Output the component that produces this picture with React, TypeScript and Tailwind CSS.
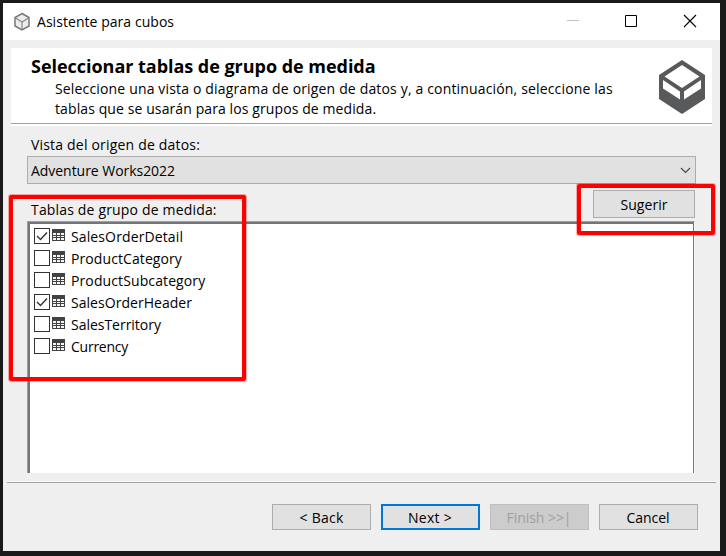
import React from "react";

const tables = [
  { name: "SalesOrderDetail", tracking: "tracking-[0.12px]", checked: true },
  { name: "ProductCategory", tracking: "tracking-[0.09px]", checked: false },
  { name: "ProductSubcategory", tracking: "tracking-[0.11px]", checked: false },
  { name: "SalesOrderHeader", tracking: "tracking-[0.04px]", checked: true },
  { name: "SalesTerritory", tracking: "tracking-[-0.02px]", checked: false },
  { name: "Currency", tracking: "tracking-[-0.25px]", checked: false },
];

const buttonBase = "flex h-[26px] w-[99px] items-center justify-center pt-px leading-5 whitespace-pre";

function TableIcon() {
  return (
    <svg width="13" height="12" className="mt-px ml-[2px] block shrink-0" shapeRendering="crispEdges">
      <path d="M0 0h13v12H0z" fill="#424242" />
      <path d="M1 4h3v2H1zM5 4h3v2H5zM9 4h3v2H9zM1 7h3v1H1zM5 7h3v1H5zM9 7h3v1H9zM1 9h3v2H1zM5 9h3v2H5zM9 9h3v2H9z" fill="#f5f5f5" />
    </svg>
  );
}

export default function App() {
  return (
    <div className="relative h-[556px] w-[726px] overflow-hidden bg-[#1a1a1a] pt-[3px] pl-[3px] font-['Open_Sans','Noto_Sans',sans-serif] text-[14px] leading-5 whitespace-nowrap text-black">
      <div className="flex h-[548px] w-[717px] flex-col bg-[#efefef]">
        <header className="flex h-[37px] shrink-0 items-center bg-white pl-[10px]">
          <svg width="18" height="20" viewBox="0 0 18 20" fill="#ececec" stroke="#777" strokeWidth="1.5">
            <path d="M9 1.5l7 4v8.5l-7 4-7-4V5.5z" />
            <path d="M2.5 6L9 10l6.5-4M9 10v7.5" fill="none" stroke="#888" strokeWidth="1.2" />
          </svg>
          <span className="ml-[6px] tracking-[0.05px]">Asistente para cubos</span>
          <svg width="132" height="14" className="mr-[22px] mb-px ml-auto" fill="none" stroke="#000">
            <path d="M1 6.5h12" stroke="#c4c4c4" />
            <path d="M59.5 1.5h11v11h-11z" />
            <path d="M118 1l12 12M130 1L118 13" strokeWidth="1.1" />
          </svg>
        </header>

        <section className="mx-2 mt-2 flex h-[78px] shrink-0 flex-col bg-white">
          <div className="flex h-[75px] justify-between">
            <div className="pt-2 pl-5">
              <h1 className="text-[18px] leading-5 font-bold tracking-[-0.03px]">Seleccionar tablas de grupo de medida</h1>
              <p className="mt-[3px] ml-6 tracking-[0.16px]">
                Seleccione una vista o diagrama de origen de datos y, a continuación, seleccione las
              </p>
              <p className="ml-6 tracking-[0.1px]">tablas que se usarán para los grupos de medida.</p>
            </div>
            <svg width="46" height="54" viewBox="0 0 46 54" className="mt-3 mr-[7px]" fill="#58595b">
              <path d="M23 0L46 15v24L23 54 0 39V15z" />
              <path d="M23 5L40.5 16.5 23 28 5.5 16.5zM4 20l17 11.5v8L4 28.5zM42 20L25 31.5v8l17-11z" fill="#fff" />
            </svg>
          </div>
          <div className="h-px bg-[#a0a0a0]" />
        </section>

        <main className="mx-6 flex flex-col">
          <label className="mt-[9px] mb-px ml-1 tracking-[0.19px]">Vista del origen de datos:</label>
          <div className="flex h-7 w-[669px] items-center border border-[#adadad] bg-[#e1e1e1] pr-1 pl-[3px]">
            <span className="pt-px tracking-[-0.04px]">Adventure Works2022</span>
            <svg width="11" height="7" className="ml-auto" fill="none" stroke="#444" strokeWidth="1.1">
              <path d="M1 1l4.5 4.5L10 1" />
            </svg>
          </div>
          <div className="flex h-[37px] items-start justify-between pt-[6px]">
            <span className="mt-[10px] ml-1 tracking-[0.17px]">Tablas de grupo de medida:</span>
            <button className="mr-px flex h-7 w-[102px] items-center justify-center border border-[#adadad] bg-[#e1e1e1] pt-px leading-5 tracking-[0.04px]">
              Sugerir
            </button>
          </div>
          <div className="flex h-[252px] w-[668px] border-t border-r border-l border-t-[#a0a0a0] border-r-[#f8f8f8] border-l-[#a0a0a0]">
            <div className="flex-1 border-t-2 border-r border-l-2 border-[#747579] bg-white pt-1 pl-1">
              {tables.map((t) => (
                <div key={t.name} className="flex h-[22px] items-start">
                  <div className="flex h-4 w-4 shrink-0 items-center justify-center border border-[#333] bg-white">
                    {t.checked && (
                      <svg width="12" height="10" fill="none" stroke="#333" strokeWidth="1.4">
                        <path d="M1 5l3.5 3.5L11 1.5" />
                      </svg>
                    )}
                  </div>
                  <TableIcon />
                  <span className={`-mt-px ml-[6px] ${t.tracking}`}>{t.name}</span>
                </div>
              ))}
            </div>
          </div>
        </main>

        <div className="mx-1 mt-2 h-[2px] border-t border-b border-t-white border-b-[#a0a0a0]" />
        <footer className="mt-[21px] ml-[269px] flex gap-[10px]">
          <button className={`${buttonBase} border border-[#adadad] bg-[#e1e1e1] tracking-[0.25px]`}>{"< Back"}</button>
          <button className={`${buttonBase} border-2 border-[#0078d7] bg-[#e1e1e1] pr-px tracking-[0.27px]`}>{"Next >"}</button>
          <button className={`${buttonBase} border border-[#bfbfbf] bg-[#ccc] pr-px tracking-[-0.05px] text-[#a0a0a0]`}>{"Finish >>|"}</button>
          <button className={`${buttonBase} border border-[#adadad] bg-[#e1e1e1] pr-px tracking-[-0.05px]`}>Cancel</button>
        </footer>
      </div>
      <div className="absolute top-[195px] left-[9px] h-[186px] w-[237px] rounded-[2px] border-4 border-[#ff0000] shadow-[0_0_0_1px_rgba(255,0,0,0.3)]" />
      <div className="absolute top-[184px] left-[577px] h-[51px] w-[138px] rounded-[2px] border-4 border-[#ff0000] shadow-[0_0_0_1px_rgba(255,0,0,0.3)]" />
    </div>
  );
}
